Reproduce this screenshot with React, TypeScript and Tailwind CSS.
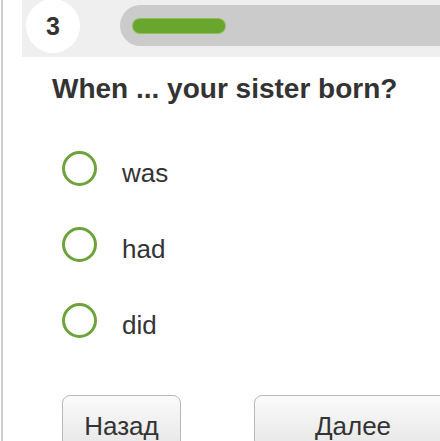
export default function App() {
  const options = ["was", "had", "did"];
  return (
    <div
      className="w-[440px] h-[441px] overflow-hidden bg-white pl-[1px]"
      style={{ fontFamily: '"Liberation Sans", Arial, sans-serif' }}
    >
      <div className="h-full border-l-2 border-[#cccccc] bg-white">
        {/* top band */}
        <div className="ml-[19px] h-[57px] bg-[#efefef] flex items-start">
          <div className="ml-[4px] -mt-[1px] w-[54px] h-[54px] shrink-0 rounded-full bg-white flex items-center justify-center text-[25px] font-bold text-[#333333] leading-none">
            3
          </div>
          <div className="ml-[40px] mt-[5px] h-[41px] flex-1 rounded-l-full bg-[#cbcbcb] flex items-center">
            <div className="ml-[13px] w-[92px] h-[14px] rounded-full bg-[#69a62e] ring-1 ring-[#8cbf5a]" />
          </div>
        </div>

        {/* question */}
        <div className="mt-[16px] ml-[49px] text-[28px] leading-[32px] font-bold text-[#333333] whitespace-nowrap">
          When ... your sister born?
        </div>

        {/* options */}
        <div className="mt-[27px] ml-[59px] flex flex-col">
          {options.map((o) => (
            <div key={o} className="h-[76px] flex items-start">
              <div className="mt-[19px] w-[35px] h-[35px] rounded-full border-[3px] border-[#6ea23a] bg-white shrink-0" />
              <div className="ml-[25px] mt-[26px] text-[26px] leading-[30px] text-[#333333]">
                {o}
              </div>
            </div>
          ))}
        </div>

        {/* buttons */}
        <div className="mt-[35px] ml-[59px] flex items-start gap-[73px]">
          <div className="w-[119px] h-[60px] shrink-0 rounded-[8px] border border-[#b8b8b8] bg-gradient-to-b from-[#fbfbfb] to-[#e4e4e4] pt-[15px] text-center text-[26px] leading-[30px] text-[#333333]">
            Назад
          </div>
          <div className="w-[198px] h-[60px] shrink-0 rounded-[8px] border border-[#b8b8b8] bg-gradient-to-b from-[#fbfbfb] to-[#e4e4e4] pt-[15px] text-center text-[26px] leading-[30px] text-[#333333]">
            Далее
          </div>
        </div>
      </div>
    </div>
  );
}
